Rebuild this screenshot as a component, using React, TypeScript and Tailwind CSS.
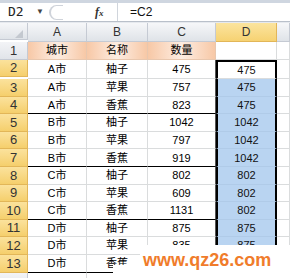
import React from 'react';

const rows = [
  { city: 'A市', name: '柚子', qty: '475', d: '475' },
  { city: 'A市', name: '苹果', qty: '757', d: '475' },
  { city: 'A市', name: '香蕉', qty: '823', d: '475' },
  { city: 'B市', name: '柚子', qty: '1042', d: '1042' },
  { city: 'B市', name: '苹果', qty: '797', d: '1042' },
  { city: 'B市', name: '香蕉', qty: '919', d: '1042' },
  { city: 'C市', name: '柚子', qty: '802', d: '802' },
  { city: 'C市', name: '苹果', qty: '609', d: '802' },
  { city: 'C市', name: '香蕉', qty: '1131', d: '802' },
  { city: 'D市', name: '柚子', qty: '875', d: '875' },
  { city: 'D市', name: '苹果', qty: '835', d: '875' },
  { city: 'D市', name: '香蕉', qty: '', d: '' },
];

const font = { fontFamily: '"Liberation Sans", "Noto Sans CJK SC", sans-serif' };

const colHead =
  'flex items-center justify-center border-r border-b border-[#c5cad3] bg-gradient-to-b from-[#f6f7f9] to-[#dfe3e8] text-[12px] text-[#333]';
const rowHeadGrey =
  'flex items-center justify-center border-r border-b border-[#c5cad3] bg-gradient-to-b from-[#f3f4f7] to-[#e1e4e9] text-[13px] text-[#333]';
const rowHeadSel =
  'flex items-center justify-center border-r border-b border-[#e2b658] bg-gradient-to-b from-[#fbe29c] to-[#f5cf6c] text-[13px] text-[#333]';
const cell = 'flex items-center justify-center border-r border-b border-[#dadcdd] text-[11px] text-black';

export default function App() {
  return (
    <div className="relative w-[290px] h-[278px] overflow-hidden bg-white" style={font}>
      {/* formula bar */}
      <div className="h-[3px] bg-[#cfd6e0]" />
      <div className="flex h-[19px] items-center bg-white border-b border-[#b9c0ca]">
        <div className="w-[36px] pl-[8px] text-[13px] text-[#222]" style={{ fontFamily: '"DejaVu Sans Mono", monospace' }}>
          D2
        </div>
        <div className="w-[12px] text-[8px] text-[#444]">▼</div>
        <div className="ml-[1px] h-[15px] w-[14px] rounded-l-full border-l-2 border-t border-b border-[#cfd3da]" />
        <div className="flex-1" />
        <div className="w-[22px] text-[12px] font-bold italic text-[#333]" style={{ fontFamily: '"Liberation Serif", serif' }}>
          f<span className="text-[9px]">x</span>
        </div>
        <div className="h-full w-px bg-[#d0d5dc]" />
        <div className="w-[172px] pl-[12px] text-[12px] text-[#111]">=C2</div>
      </div>
      <div className="h-px bg-[#e6e9ee]" />

      {/* sheet */}
      <div className="grid grid-cols-[28px_59px_61px_68px_61px_13px]">
        <div className={colHead + ' h-[17px]'}>
          <svg width="8" height="8" className="ml-[10px] mt-[6px]">
            <path d="M8 0 L8 8 L0 8 Z" fill="#c3c8cf" />
          </svg>
        </div>
        <div className={colHead}>A</div>
        <div className={colHead}>B</div>
        <div className={colHead}>C</div>
        <div className="flex items-center justify-center border-r border-b border-[#e2b658] bg-gradient-to-b from-[#fbe49e] to-[#f6d272] text-[12px] text-[#333]">
          D
        </div>
        <div className={colHead} />

        {/* row 1 */}
        <div className={rowHeadGrey + ' h-[17.6px]'}>1</div>
        {['城市', '名称', '数量'].map((t) => (
          <div
            key={t}
            className="flex items-center justify-center border-r border-b border-[#e8c7ae] bg-gradient-to-r from-[#f7c8a6] via-[#fdede2] to-[#f7c8a6] text-[11px] text-black"
          >
            {t}
          </div>
        ))}
        <div className={cell} />
        <div className={cell} />

        {rows.map((r, i) => {
          const group = i % 3 === 2 ? ' border-b-black' : '';
          const first = i === 0;
          const last = i === rows.length - 1;
          return (
            <React.Fragment key={i}>
              <div className={rowHeadSel + ' h-[17.6px]'}>{i + 2}</div>
              <div className={cell + group}>{r.city}</div>
              <div className={cell + group}>{r.name}</div>
              <div className={cell + group + ' border-r-[#555]'}>{r.qty}</div>
              <div
                className={
                  'flex items-center justify-center border-x-2 border-x-black text-[11px] text-[#111]' +
                  (first ? ' border-t-2 border-t-black bg-white border-b border-b-[#dadcdd]' : ' bg-[#b9d4f1] border-b border-b-[#b0cbe8]') +
                  (last ? ' border-b-2 border-b-black' : '')
                }
              >
                {r.d}
              </div>
              <div className={cell} />
            </React.Fragment>
          );
        })}

        <div className={rowHeadGrey + ' h-[17.6px] items-start'}>14</div>
        <div className={cell} />
        <div className={cell} />
        <div className={cell} />
        <div className={cell} />
        <div className={cell} />
      </div>

      {/* watermark */}
      <div className="absolute left-[113px] top-[265px] h-[13px] w-[177px] bg-white" />
      <div className="absolute left-[140px] top-[245px] flex h-[33px] w-[150px] items-start bg-white pl-[3px] pt-[4px]">
        <span className="text-[18px] font-bold leading-[22px] text-[#f07c2b]" style={{ fontFamily: '"Liberation Sans", sans-serif' }}>
          www.qz26.com
        </span>
      </div>
    </div>
  );
}
